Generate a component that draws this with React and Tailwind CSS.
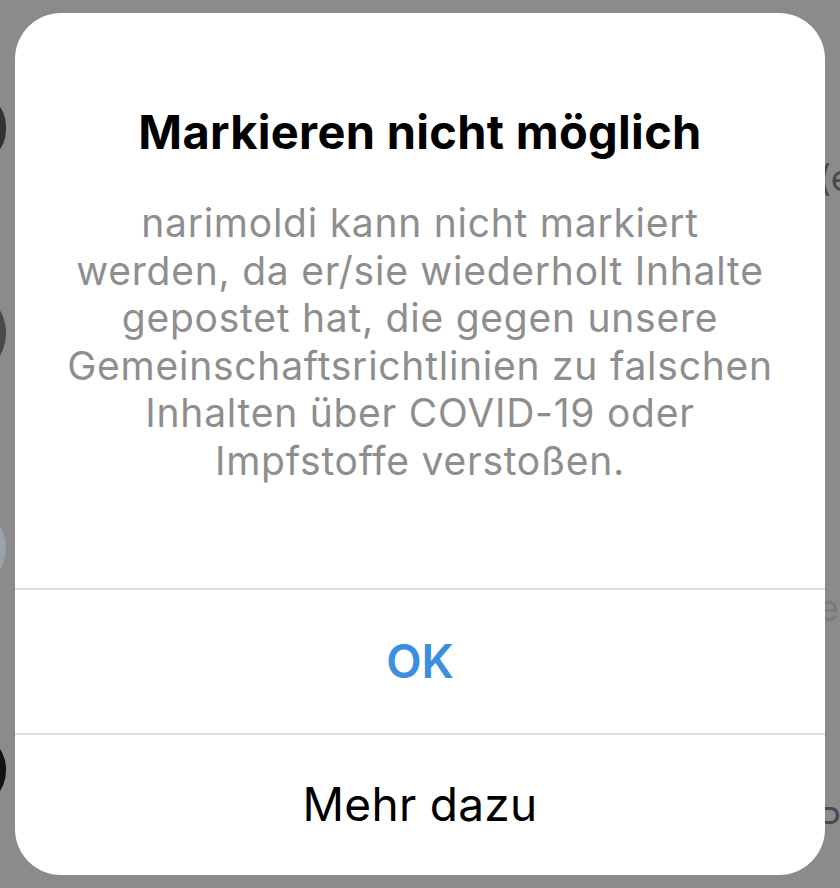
import React from "react";

// Blurred bits of the list behind the alert overlay
function BackdropPeeks() {
  return (
    <>
      <div className="absolute left-[-62px] top-[92px] h-[72px] w-[68px] rounded-full bg-[#2f3534]" />
      <div className="absolute left-[-78px] top-[290px] h-[86px] w-[84px] rounded-full bg-[#4a4a4a]" />
      <div className="absolute left-[-80px] top-[505px] h-[86px] w-[86px] rounded-full bg-[#9aa3ad]" />
      <div className="absolute left-[-66px] top-[733px] h-[74px] w-[72px] rounded-full bg-[#111216]" />
      <span className="absolute left-[818px] top-[158px] text-[36px] leading-[40px] text-[#4a4a4a]">(e</span>
      <span className="absolute left-[818px] top-[588px] text-[36px] leading-[40px] text-[#7a7a7a]">en</span>
      <span className="absolute left-[818px] top-[800px] text-[36px] leading-[40px] text-[#4a4a4a]">Pe</span>
    </>
  );
}

export default function App() {
  return (
    <div
      className="relative h-[888px] w-[840px] overflow-hidden bg-[#8b8b8b] pl-[15px] pt-[13px]"
      style={{ fontFamily: "Inter, 'Noto Sans', sans-serif" }}
    >
      <BackdropPeeks />

      <div className="relative flex h-[862px] w-[810px] flex-col overflow-hidden rounded-[46px] bg-white">
        {/* Message */}
        <div className="flex h-[575px] flex-col items-center px-[20px] pt-[90px] text-center">
          <h1 className="text-[47px] font-bold leading-[58px] tracking-[0.3px] text-black">
            Markieren nicht möglich
          </h1>
          <p className="mt-[38px] text-[39px] leading-[47.6px] tracking-[0.75px] text-[#8e8e8e]">
            narimoldi kann nicht markiert
            <br />
            werden, da er/sie wiederholt Inhalte
            <br />
            gepostet hat, die gegen unsere
            <br />
            Gemeinschaftsrichtlinien zu falschen
            <br />
            Inhalten über COVID-19 oder
            <br />
            Impfstoffe verstoßen.
          </p>
        </div>

        {/* Actions */}
        <div className="h-[2px] bg-[#dddddd]" />
        <button className="flex h-[143px] items-center justify-center text-[46px] font-semibold text-[#3b8ee0]">
          OK
        </button>
        <div className="h-[2px] bg-[#dddddd]" />
        <button className="flex flex-1 items-center justify-center pb-[2px] text-[46px] tracking-[0.3px] text-black">
          Mehr dazu
        </button>
      </div>
    </div>
  );
}
